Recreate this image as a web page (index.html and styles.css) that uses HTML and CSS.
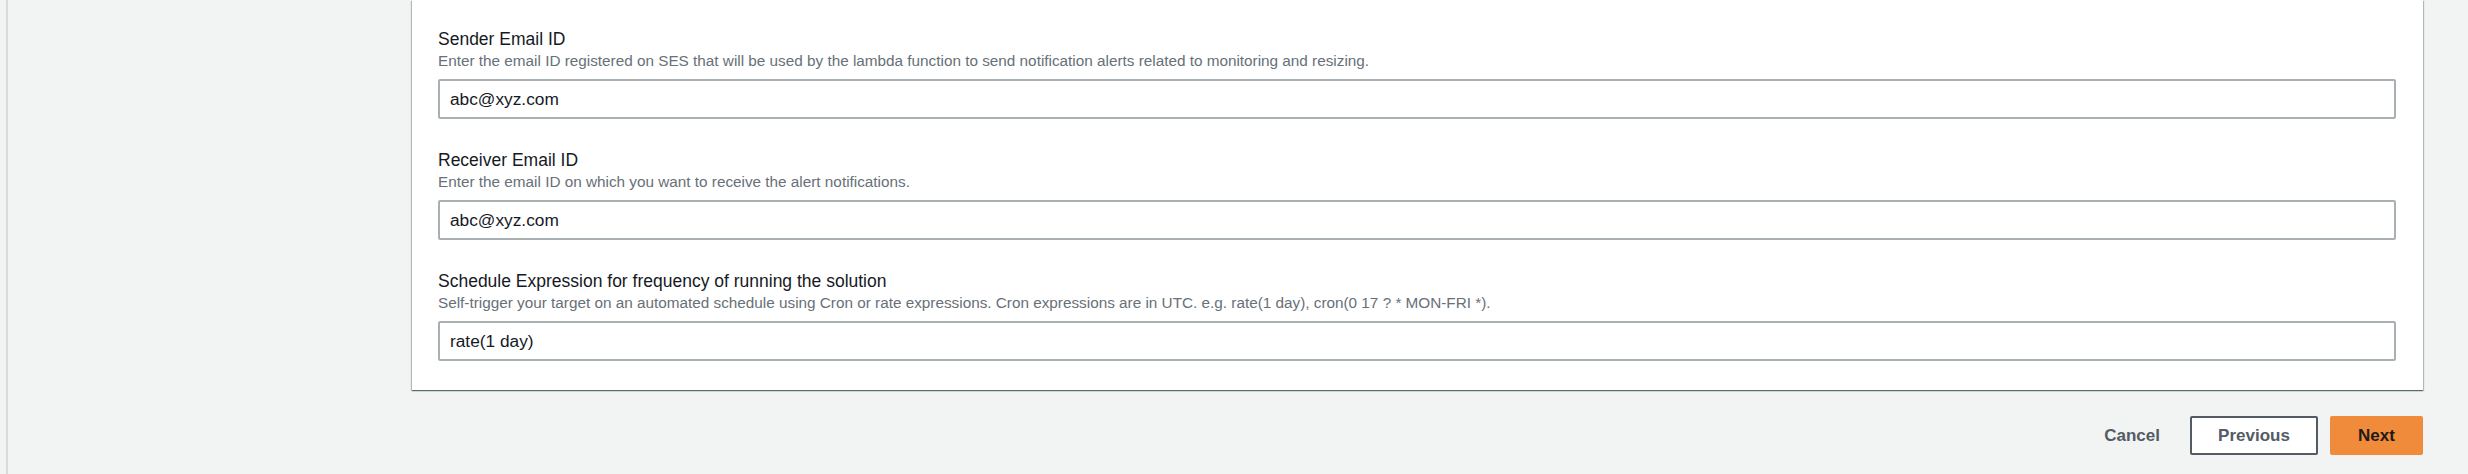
FILE: index.html
```html
<!DOCTYPE html>
<html lang="en">
<head>
<meta charset="utf-8">
<title>Configure notifications</title>
<link rel="stylesheet" href="styles.css">
</head>
<body>
<div class="layout">
  <div class="rail"></div>
  <main class="main">
    <section class="card">
      <div class="field">
        <label class="label" for="sender">Sender Email ID</label>
        <div class="desc">Enter the email ID registered on SES that will be used by the lambda function to send notification alerts related to monitoring and resizing.</div>
        <input class="input" id="sender" type="text" value="abc@xyz.com">
      </div>
      <div class="field">
        <label class="label" for="receiver">Receiver Email ID</label>
        <div class="desc">Enter the email ID on which you want to receive the alert notifications.</div>
        <input class="input" id="receiver" type="text" value="abc@xyz.com">
      </div>
      <div class="field">
        <label class="label" for="schedule">Schedule Expression for frequency of running the solution</label>
        <div class="desc">Self-trigger your target on an automated schedule using Cron or rate expressions. Cron expressions are in UTC. e.g. rate(1 day), cron(0 17 ? * MON-FRI *).</div>
        <input class="input" id="schedule" type="text" value="rate(1 day)">
      </div>
    </section>
    <div class="actions">
      <button class="btn btn-link" type="button">Cancel</button>
      <button class="btn btn-normal" type="button">Previous</button>
      <button class="btn btn-primary" type="button">Next</button>
    </div>
  </main>
</div>
</body>
</html>
```

FILE: styles.css
```css
html, body {
  margin: 0;
  padding: 0;
}

body {
  background: #f2f3f3;
  font-family: "Liberation Sans", Arial, sans-serif;
  color: #16191f;
  width: 2468px;
  height: 474px;
  overflow: hidden;
}

.layout {
  display: flex;
  height: 474px;
}

.rail {
  width: 6px;
  flex: 0 0 6px;
  border-right: 2px solid #d5dbdb;
}

.main {
  flex: 1;
  display: flex;
  flex-direction: column;
  padding: 0 45px 0 404px;
}

.card {
  background: #ffffff;
  padding: 28px 27px 29px 26px;
  display: flex;
  flex-direction: column;
  gap: 30px;
  box-shadow: 0 1px 1px 0 rgba(0, 28, 36, 0.4), 1px 1px 1px 0 rgba(0, 28, 36, 0.22), -1px 1px 1px 0 rgba(0, 28, 36, 0.22);
}

.field {
  display: flex;
  flex-direction: column;
}

.label {
  font-size: 17.5px;
  line-height: 23px;
  color: #16191f;
}

.desc {
  font-size: 15.3px;
  line-height: 20px;
  color: #687078;
  margin-bottom: 8px;
}

.input {
  box-sizing: border-box;
  height: 40px;
  width: 100%;
  border: 2px solid #a9b0b4;
  border-radius: 2px;
  padding: 0 10px;
  font-family: "Liberation Sans", Arial, sans-serif;
  font-size: 17.3px;
  color: #16191f;
  background: #ffffff;
}

.actions {
  display: flex;
  justify-content: flex-end;
  align-items: center;
  gap: 12px;
  margin-top: 26px;
}

.btn {
  font-family: "Liberation Sans", Arial, sans-serif;
  font-size: 17px;
  font-weight: 700;
  height: 39px;
  border-radius: 2px;
  cursor: pointer;
  box-sizing: border-box;
}

.btn-link {
  background: transparent;
  border: none;
  color: #545b64;
  padding: 0 18px;
}

.btn-normal {
  width: 128px;
  background: #ffffff;
  border: 2px solid #545b64;
  color: #545b64;
}

.btn-primary {
  width: 93px;
  background: #ef8b3b;
  border: 2px solid #ef8b3b;
  color: #1f1a17;
}
```
